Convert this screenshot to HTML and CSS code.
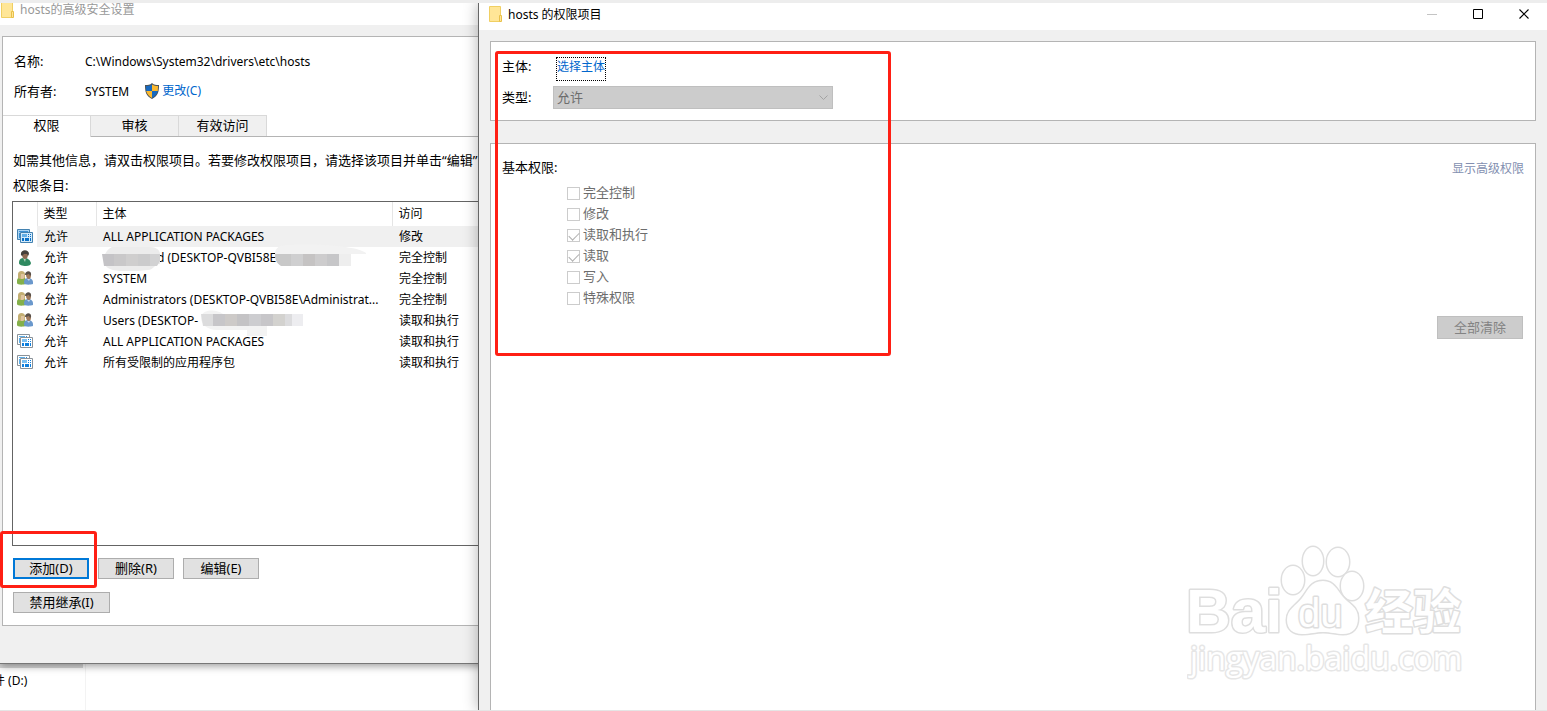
FILE: index.html
```html
<!DOCTYPE html>
<html lang="zh-CN">
<head>
<meta charset="utf-8">
<title>hosts 的权限项目</title>
<link rel="stylesheet" href="styles.css">
</head>
<body>
<svg class="defs" aria-hidden="true">
  <symbol id="folder" viewBox="0 0 13 16">
    <path d="M.5.5h11v15H.5z" fill="#ffe697" stroke="#f0cf63"/>
    <path d="M10.5 9.500h2v6h-2z" fill="#ffe697" stroke="#e8c04a"/>
  </symbol>
  <symbol id="package" viewBox="0 0 16 14">
    <path d="M.5.5h12v10H.5z" fill="#fff" stroke="#8a9299"/>
    <path d="M2 2h6v1H2zM2 4h1v5H2z" fill="#5aaeea"/><path d="M9 2h1v1H9z" fill="#2a8bdc"/>
    <path d="M3.500 3.500h12v10h-12z" fill="#fff" stroke="#8a9299"/>
    <path d="M5 5h5v3H5z" fill="#7cc0f0"/>
    <path d="M11 5h1v1h-1zM13 5h1v1h-1zM11 7h1v1h-1zM13 7h1v1h-1zM5 9h2v3H5zM8 9h4v3H8zM13 9h1v3h-1z" fill="#0f7fdc"/>
  </symbol>
  <symbol id="package-on" viewBox="0 0 16 14">
    <path d="M.5.5h12v10H.5z" fill="#a9d3f2" stroke="#4482b0"/>
    <path d="M2 2h9v1H2zM2 4h1v5H2z" fill="#3b8fd2"/>
    <path d="M3.500 3.500h12v10h-12z" fill="#d3eafa" stroke="#4482b0"/>
    <path d="M5 5h5v3H5z" fill="#62aee6"/>
    <path d="M11 5h1v1h-1zM13 5h1v1h-1zM11 7h1v1h-1zM13 7h1v1h-1zM5 9h2v3H5zM8 9h4v3H8zM13 9h1v3h-1z" fill="#0870c8"/>
  </symbol>
  <symbol id="user" viewBox="0 0 16 16">
    <path d="M2 13c0-4 2-5 5-5 4 0 6 2 7 5 0 2-2 3-5 3-4 0-7-1-7-3z" fill="#2f8a60"/>
    <path d="M6 8l2 4 1-4z" fill="#b5d2c0"/>
    <path d="M5 4c0-3 6-3 6 0 0 3-1 5-3 5S5 7 5 4z" fill="#8d6a52"/>
    <path d="M4 5c-1-6 8-6 8-1l-1 2-1-2H7L5 6z" fill="#45403a"/>
  </symbol>
  <symbol id="group" viewBox="0 0 16 14">
    <path d="M0 10c0-3 2-4 5-4s4 2 4 4v3c-3 1-9 1-9-1z" fill="#84b04a"/>
    <path d="M1 7V3c0-4 7-4 7 0v4l-2 1H3z" fill="#c3ae72"/>
    <path d="M4 3h3c1 3 0 5-2 5S4 6 4 3z" fill="#dfc4a0"/>
    <path d="M7 11c0-3 2-4 4-4 3 0 5 2 5 4v2c-3 1-9 1-9-1z" fill="#6a98cc"/>
    <path d="M9 4c0-3 5-3 5 0s-1 4-2 4c-2 0-3-2-3-4z" fill="#a07a5c"/>
    <path d="M8 4c0-5 7-5 6 0l-1 1-1-2-3 1z" fill="#5a5048"/>
    <path d="M10 8l2 2 1-2z" fill="#c3d6ea"/>
  </symbol>
</svg>

<main class="desktop">
  <aside class="explorer">
    <div class="explorer-nav"><span class="drive">件 (D:)</span></div>
  </aside>

  <section class="window settings">
    <header class="titlebar">
      <svg class="folder"><use href="#folder"/></svg>
      <span>hosts的高级安全设置</span>
    </header>
    <div class="settings-panel">
      <dl class="facts">
        <dt>名称:</dt><dd>C:\Windows\System32\drivers\etc\hosts</dd>
        <dt>所有者:</dt>
        <dd>SYSTEM
          <a class="change" href="#">
            <svg class="shield" viewBox="0 0 14 16">
              <path d="M7 0c2 2 4 2 7 2 0 7-1 11-7 14C1 13 0 9 0 2c3 0 5 0 7-2z" fill="#4b5358"/>
              <path d="M7 1.500V8H1.200L1 3c2 0 4 0 6-1.500z" fill="#1769c0"/>
              <path d="M7 1.500V8h5.800L13 3c-2 0-4 0-6-1.500z" fill="#fcb92f"/>
              <path d="M7 8H1.200C2 11 4 13.500 7 15z" fill="#fcb92f"/>
              <path d="M7 8h5.800C12 11 10 13.500 7 15z" fill="#1769c0"/>
            </svg>更改(C)</a>
        </dd>
      </dl>
      <nav class="tabs">
        <button class="tab active" type="button">权限</button>
        <button class="tab" type="button">审核</button>
        <button class="tab" type="button">有效访问</button>
      </nav>
      <div class="tab-page">
        <p class="hint">如需其他信息，请双击权限项目。若要修改权限项目，请选择该项目并单击“编辑”</p>
        <p class="entries-label">权限条目:</p>
        <div class="list">
          <table class="entries">
            <colgroup><col class="c-icon"><col class="c-type"><col class="c-who"><col></colgroup>
            <thead><tr><th></th><th>类型</th><th>主体</th><th>访问</th></tr></thead>
            <tbody>
              <tr class="selected"><td><svg class="pkg"><use href="#package-on"/></svg></td><td>允许</td><td>ALL APPLICATION PACKAGES</td><td>修改</td></tr>
              <tr><td><svg class="person"><use href="#user"/></svg></td><td>允许</td><td>
                <div class="masked"><span class="mask-gap"></span>d (DESKTOP-QVBI58E
                  <svg class="smudge smudge-name" viewBox="0 0 58 24"><path d="M10 0h38c6 0 10 3 10 7v10c-6 0-6 6-12 6-16 2-34 2-40-2C0 17 0 5 10 0z" fill="#ececec"/><path d="M0 7h12v12H2z" fill="#c4c3c6"/><path d="M12 7h12v12H12z" fill="#c9c8c9"/><path d="M24 7h12v12H24z" fill="#cfcece"/><path d="M36 7h12v12H36z" fill="#cbcbcc"/><path d="M48 7h10v7l-3 5h-7z" fill="#d2d2d3"/></svg>
                  <svg class="smudge smudge-domain" viewBox="0 0 92 22"><path d="M6 2c12-3 74-2 85 7v1H0c0-4 2-7 6-8z" fill="#f2f2f2"/><path d="M0 10h16v12H6c-5-3-6-7-6-12z" fill="#c8c8c8"/><path d="M16 10h12v12H16z" fill="#cfcfd0"/><path d="M28 10h12v12H28z" fill="#c5c3c3"/><path d="M40 10h12v12H40z" fill="#cdcccd"/><path d="M52 10h12v12H52z" fill="#c6c6c8"/><path d="M64 10h12v12H64z" fill="#eee"/></svg>
                </div></td><td>完全控制</td></tr>
              <tr><td><svg class="pkg"><use href="#group"/></svg></td><td>允许</td><td>SYSTEM</td><td>完全控制</td></tr>
              <tr><td><svg class="pkg"><use href="#group"/></svg></td><td>允许</td><td>Administrators (DESKTOP-QVBI58E\Administrat...</td><td>完全控制</td></tr>
              <tr><td><svg class="pkg"><use href="#group"/></svg></td><td>允许</td><td>
                <div class="masked">Users (DESKTOP-
                  <svg class="smudge smudge-users" viewBox="0 0 104 27"><path d="M0 6c3-7 16-7 22-2h66v12H66v10H46v-6H16C4 20-1 12 0 6z" fill="#f3f3f3"/><path d="M0 4h12v12H2z" fill="#dcdcdd"/><path d="M12 4h12v12H12z" fill="#c7c6c9"/><path d="M24 4h12v12H24z" fill="#cdcac8"/><path d="M36 4h12v12H36z" fill="#c4c3c5"/><path d="M48 4h12v12H48z" fill="#cdcdd0"/><path d="M60 4h12v12H60z" fill="#c7c6c9"/><path d="M72 4h12v12H72z" fill="#d3d2cf"/><path d="M84 4h7v12h-7z" fill="#dcdcde"/><path d="M91 4h11v12H91z" fill="#ededf0"/></svg>
                </div></td><td>读取和执行</td></tr>
              <tr><td><svg class="pkg"><use href="#package"/></svg></td><td>允许</td><td>ALL APPLICATION PACKAGES</td><td>读取和执行</td></tr>
              <tr><td><svg class="pkg"><use href="#package"/></svg></td><td>允许</td><td>所有受限制的应用程序包</td><td>读取和执行</td></tr>
            </tbody>
          </table>
        </div>
        <div class="actions">
          <button class="btn default" type="button">添加(D)</button>
          <button class="btn" type="button">删除(R)</button>
          <button class="btn" type="button">编辑(E)</button>
        </div>
        <div class="actions">
          <button class="btn wide" type="button">禁用继承(I)</button>
        </div>
      </div>
    </div>
  </section>

  <section class="window dialog">
    <header class="titlebar">
      <svg class="folder"><use href="#folder"/></svg>
      <h1>hosts 的权限项目</h1>
      <div class="controls">
        <button type="button" aria-label="最小化" disabled><svg viewBox="0 0 11 11"><path d="M0 5.500h10" stroke="#c4c4c4"/></svg></button>
        <button type="button" aria-label="最大化"><svg viewBox="0 0 11 11"><path d="M.5.5h9v9h-9z" fill="none" stroke="#000"/></svg></button>
        <button type="button" aria-label="关闭"><svg viewBox="0 0 11 11"><path d="M.5.5l9 9M9.500.5l-9 9" stroke="#000" stroke-width="1.100"/></svg></button>
      </div>
    </header>
    <div class="dialog-body">
      <div class="panel subject">
        <span>主体:</span><a class="pick" href="#">选择主体</a>
        <label for="kind">类型:</label>
        <div class="select-box">
          <select id="kind" disabled><option>允许</option></select>
          <svg class="chevron" viewBox="0 0 9 6"><path d="M.5.5l4 4 4-4" fill="none" stroke="#a3a3a3"/></svg>
        </div>
      </div>
      <div class="panel rights">
        <div class="rights-head"><h2>基本权限:</h2><a class="advanced" href="#">显示高级权限</a></div>
        <div class="checks">
          <label><input type="checkbox" disabled>完全控制</label>
          <label><input type="checkbox" disabled>修改</label>
          <label><input type="checkbox" disabled checked>读取和执行</label>
          <label><input type="checkbox" disabled checked>读取</label>
          <label><input type="checkbox" disabled>写入</label>
          <label><input type="checkbox" disabled>特殊权限</label>
        </div>
        <button class="btn clear" type="button" disabled>全部清除</button>
      </div>
    </div>
    <svg class="watermark" viewBox="0 0 290 140" role="img" aria-label="Baidu 经验">
      <g class="wm-shape">
        <text class="wm-bai" x="-1" y="90">Bai</text>
        <ellipse cx="106" cy="38" rx="11" ry="14"/>
        <ellipse cx="126" cy="19" rx="10" ry="14"/>
        <ellipse cx="151" cy="20" rx="11" ry="14"/>
        <ellipse cx="165" cy="44" rx="11" ry="14"/>
        <path d="M136 39c-12 0-15 9-21 17s-15 11-15 22c0 9 6 14 15 14 9 0 13-2 21-2s13 2 20 2c10 0 15-6 15-16 0-11-9-14-15-21s-9-16-20-16z"/>
        <text class="wm-du" x="111" y="85">du</text>
        <text class="wm-cn" x="178" y="87">经验</text>
        <text class="wm-url" x="3" y="128">jingyan.baidu.com</text>
      </g>
    </svg>
  </section>

  <div class="mark mark-add"></div>
  <div class="mark mark-form"></div>
</main>
</body>
</html>
```
FILE: styles.css
```css
* { box-sizing: border-box; }

body {
  margin: 0;
  color: #000;
  font: 13px/20px "Noto Sans", "Noto Sans CJK SC", sans-serif;
}

h1, h2, p, dl, dd { margin: 0; font-size: inherit; font-weight: normal; }
a { color: #0066cc; text-decoration: none; }
button, select, input { margin: 0; font: inherit; color: inherit; }
svg { display: block; }
.defs { position: absolute; width: 0; height: 0; }

.desktop {
  position: relative;
  height: 100vh;
  overflow: hidden;
  background: #fff;
  border-top: 3px solid #ededed;
  border-bottom: 1px solid #e5e5e5;
}

/* Explorer window behind the dialogs */
.explorer { height: 100%; display: flex; align-items: flex-end; }
.explorer-nav {
  width: 86px;
  height: 47px;
  padding-right: 2px;
  overflow: hidden;
  border-right: 1px solid #f3f3f3;
}
.explorer-nav::before {
  content: "";
  display: block;
  height: 5px;
  background: #d9d9d9;
}
.drive { display: block; margin: 3px 0 0 -7px; font-size: 12px; }

.window { position: absolute; top: 0; background: #f0f0f0; }
.titlebar { display: flex; background: #fff; font-size: 12px; }
.folder { width: 13px; height: 16px; }

/* Advanced security settings */
.settings {
  left: 0;
  width: 640px;
  padding-bottom: 37px;
  border-bottom: 1px solid #777;
  box-shadow: 0 2px 8px rgba(0, 0, 0, .4);
}
.settings .titlebar {
  align-items: center;
  gap: 6px;
  height: 22px;
  padding: 0 1px 8px;
  color: #999;
}
.settings-panel {
  margin: 11px 2px 0;
  padding-top: 14px;
  background: #fff;
  border: 1px solid #b4b4b4;
}
.facts {
  display: grid;
  grid-template-columns: 71px 1fr;
  row-gap: 10px;
  padding-left: 11px;
}
.facts dd { display: flex; gap: 16px; font-size: 12px; line-height: 22px; height: 20px; }
.change { display: flex; align-items: center; gap: 3px; }
.shield { width: 14px; height: 16px; }

.tabs { display: flex; margin-top: 14px; border-bottom: 1px solid #b4b4b4; }
.tab {
  width: 88px;
  height: 21px;
  padding: 0 0 2px;
  line-height: 18px;
  background: #f0f0f0;
  border: 1px solid #d9d9d9;
  border-width: 1px 1px 0 0;
}
.tab.active { height: 22px; margin-bottom: -1px; padding-bottom: 4px; background: #fff; }

.tab-page { padding: 13px 0 12px 10px; }
.hint { white-space: nowrap; }
.entries-label { margin: 5px 0 6px; }
.list { min-height: 345px; margin-left: -1px; border: 1px solid #646464; }
.entries {
  width: 100%;
  table-layout: fixed;
  border-collapse: collapse;
  font-size: 12px;
}
.c-icon { width: 24px; }
.c-type { width: 59px; }
.c-who { width: 296px; }
.entries th {
  height: 24px;
  padding: 0 6px;
  font-weight: normal;
  text-align: left;
  border-right: 1px solid #e5e5e5;
}
.entries td {
  height: 21px;
  padding: 0 0 0 7px;
  line-height: 21px;
  white-space: nowrap;
}
.entries td:first-child { padding: 0 4px; }
.selected td:not(:first-child) { background: #f0f0f0; }
.pkg { width: 16px; height: 14px; margin-bottom: 2px; }
.person { width: 16px; height: 16px; }
.masked { position: relative; display: flex; }
.mask-gap { width: 54px; }
.smudge { position: absolute; }
.smudge-name { left: -1px; top: 0; width: 58px; height: 24px; }
.smudge-domain { left: 172px; top: -3px; width: 92px; height: 22px; }
.smudge-users { left: 98px; top: 0; width: 104px; height: 27px; }

.actions { display: flex; gap: 9px; margin-top: 12px; }
.actions + .actions { margin-top: 13px; }
.btn {
  width: 76px;
  height: 21px;
  padding: 0;
  line-height: 17px;
  background: #e1e1e1;
  border: 1px solid #adadad;
}
.btn.default { border: 2px solid #0078d7; }
.btn.wide { width: 97px; }

/* Permission entry dialog */
.dialog {
  left: 478px;
  right: 0;
  bottom: 0;
  display: flex;
  flex-direction: column;
  border-left: 1px solid #666;
  box-shadow: 0 0 14px rgba(0, 0, 0, .3);
}
.dialog .titlebar { gap: 6px; height: 27px; padding-left: 10px; }
.dialog .folder { margin-top: 3px; }
.dialog h1 { line-height: 23px; }
.controls { display: flex; height: 23px; margin-left: auto; }
.controls button {
  display: grid;
  place-items: center;
  width: 46px;
  padding: 0;
  background: none;
  border: 0;
}
.controls svg { width: 11px; height: 11px; }
.dialog-body {
  flex: 1;
  display: flex;
  flex-direction: column;
  gap: 22px;
  padding: 11px 11px 0;
}
.panel { background: #fff; border: 1px solid #b4b4b4; }
.subject {
  display: grid;
  grid-template-columns: 51px 280px;
  row-gap: 6px;
  padding: 16px 11px 11px;
}
.subject > span { line-height: 16px; }
.subject > label { line-height: 22px; }
.pick {
  justify-self: start;
  height: 22px;
  margin-left: 4px;
  font-size: 12px;
  line-height: 18px;
  outline: 1px dotted #000;
}
.select-box { position: relative; }
.select-box select {
  display: block;
  width: 100%;
  height: 23px;
  padding: 0 3px 2px;
  appearance: none;
  color: #6d6d6d;
  opacity: 1;
  background: #ccc;
  border: 1px solid #bfbfbf;
  border-radius: 0;
}
.chevron { position: absolute; right: 5px; top: 9px; width: 9px; height: 6px; }

.rights { flex: 1; padding: 13px 11px 0; border-bottom: 0; }
.rights-head { display: flex; justify-content: space-between; }
.advanced { color: #838fb0; font-size: 12px; line-height: 24px; }
.checks { display: grid; margin: 0 0 9px 65px; color: #6d6d6d; }
.checks label { display: flex; align-items: center; gap: 3px; height: 21px; }
.checks input {
  width: 13px;
  height: 13px;
  margin-top: 3px;
  appearance: none;
  background: #fff;
  border: 1px solid #ccc;
}
.checks input:checked::after {
  content: "";
  display: block;
  width: 9px;
  height: 5px;
  margin: 2px 1px;
  border: solid #b0b0b0;
  border-width: 0 0 1px 1px;
  transform: rotate(-45deg);
}
.btn.clear {
  display: block;
  width: 86px;
  height: 23px;
  margin: 0 1px 0 auto;
  color: #838383;
  background: #ccc;
  border-color: #bfbfbf;
}

/* Site watermark */
.watermark {
  position: absolute;
  right: 70px;
  bottom: 28px;
  width: 290px;
  height: 140px;
}
.wm-shape {
  fill: #fff;
  stroke: #dedede;
  stroke-width: 3px;
  stroke-linejoin: round;
  paint-order: stroke;
}
.wm-bai { font: bold 62px "Liberation Sans", sans-serif; }
.wm-du { font: 40px "Liberation Sans", sans-serif; }
.wm-cn { font: bold 48px "Noto Sans CJK SC", sans-serif; }
.wm-url { font: 32px "Open Sans", sans-serif; stroke: #e6e6e6; }

/* Red annotation frames */
.mark { position: absolute; border: 3px solid #ff1f14; border-radius: 3px; }
.mark-add { left: 0; top: 528px; width: 97px; height: 57px; }
.mark-form { left: 495px; top: 48px; width: 396px; height: 305px; }
```
